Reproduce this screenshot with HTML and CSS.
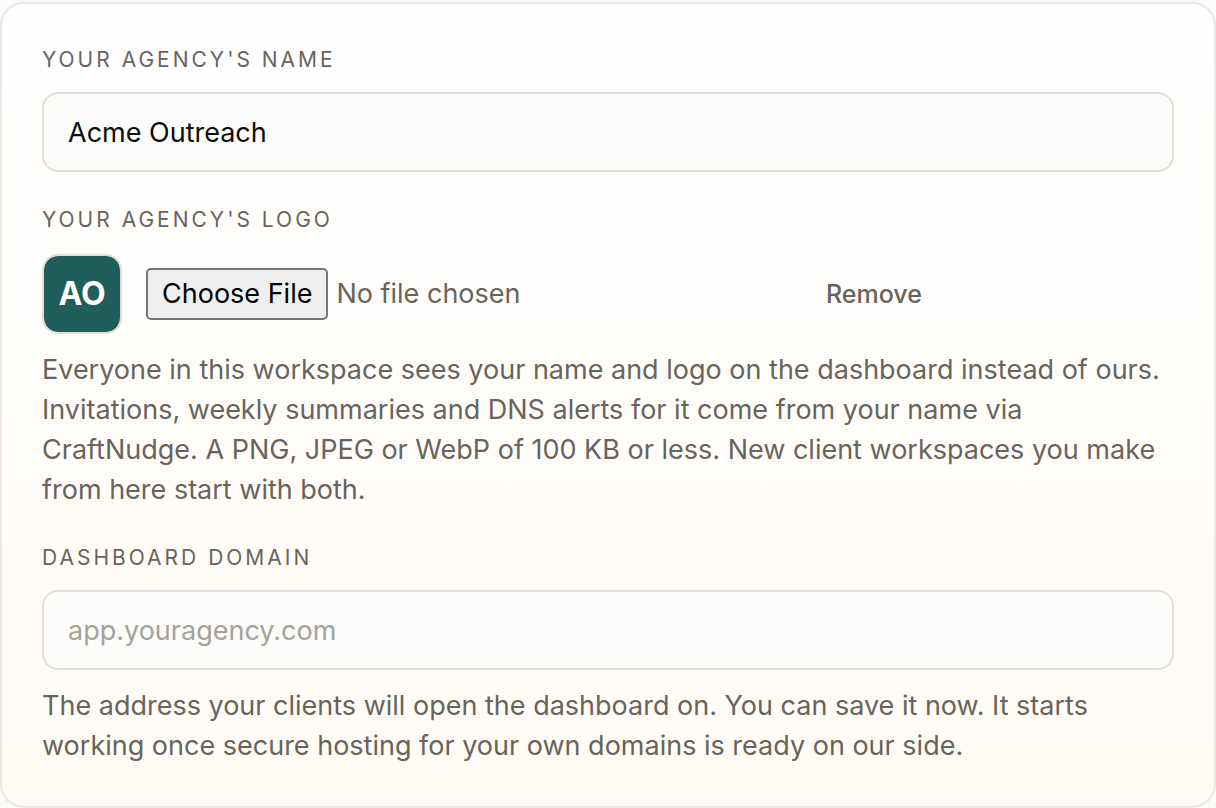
FILE: index.html
```html
<!DOCTYPE html>
<html lang="en">

<head>
    <meta charset="UTF-8">
    <meta name="viewport" content="width=device-width, initial-scale=1.0">
    <title>Agency branding</title>
    <link rel="stylesheet" href="styles.css">
</head>

<body>

    <form class="card">
        <div class="field">
            <label class="label" for="agency-name">Your agency's name</label>
            <input class="input" id="agency-name" type="text" value="Acme Outreach">
        </div>

        <div class="field">
            <label class="label" for="agency-logo">Your agency's logo</label>
            <div class="logo-row">
                <div class="logo">AO</div>
                <input class="file" id="agency-logo" type="file" accept="image/png,image/jpeg,image/webp">
                <button class="remove" type="button">Remove</button>
            </div>
            <p class="help">Everyone in this workspace sees your name and logo on the dashboard instead of ours. Invitations, weekly summaries and DNS alerts for it come from your name via CraftNudge. A PNG, JPEG or WebP of 100 KB or less. New client workspaces you make from here start with both.</p>
        </div>

        <div class="field">
            <label class="label" for="domain">Dashboard domain</label>
            <input class="input" id="domain" type="text" placeholder="app.youragency.com">
            <p class="help">The address your clients will open the dashboard on. You can save it now. It starts working once secure hosting for your own domains is ready on our side.</p>
        </div>
    </form>

</body>

</html>
```
FILE: styles.css
```css
* {
    box-sizing: border-box;
}

body {
    margin: 0;
    padding-top: 2px;
    background-color: #fbfbf9;
    font-family: Inter, "Liberation Sans", sans-serif;
    font-size: 27px;
    line-height: 40px;
    color: #68645c;
}

.card {
    display: flex;
    flex-direction: column;
    gap: 32px;
    padding: 40px;
    border: 2px solid #e9e7e4;
    border-radius: 24px;
    background: linear-gradient(#ffffff, #fffbf5);
}

.field {
    display: flex;
    flex-direction: column;
    gap: 16px;
}

.label {
    font-size: 21px;
    line-height: 32px;
    letter-spacing: 3px;
    text-transform: uppercase;
}

.input {
    width: 100%;
    height: 80px;
    padding: 0 24px;
    border: 2px solid #e3dfd7;
    border-radius: 16px;
    background-color: #fcfcfa;
    font: inherit;
    color: #0c0c0c;
}

.input::placeholder {
    color: #a3a29b;
    opacity: 1;
}

.logo-row {
    display: flex;
    align-items: center;
    gap: 24px;
    padding-top: 2px;
}

.logo {
    display: flex;
    flex: none;
    align-items: center;
    justify-content: center;
    width: 80px;
    height: 80px;
    border: 2px solid #e3dfd7;
    border-radius: 16px;
    background-color: #1f5e5a;
    background-clip: padding-box;
    font-size: 32px;
    font-weight: bold;
    color: #ffffff;
}

.file {
    flex: 0 1 656px;
    min-width: 0;
    font: inherit;
    color: inherit;
}

.file::file-selector-button {
    height: 52px;
    margin-right: 8px;
    padding: 0 14px;
    border: 2px solid #767676;
    border-radius: 5px;
    background-color: #efefef;
    font: inherit;
    color: #000000;
}

.remove {
    padding: 0;
    border: 0;
    background: none;
    font: inherit;
    font-size: 25px;
    font-weight: 500;
    color: inherit;
}

.help {
    margin: 0;
}
```
